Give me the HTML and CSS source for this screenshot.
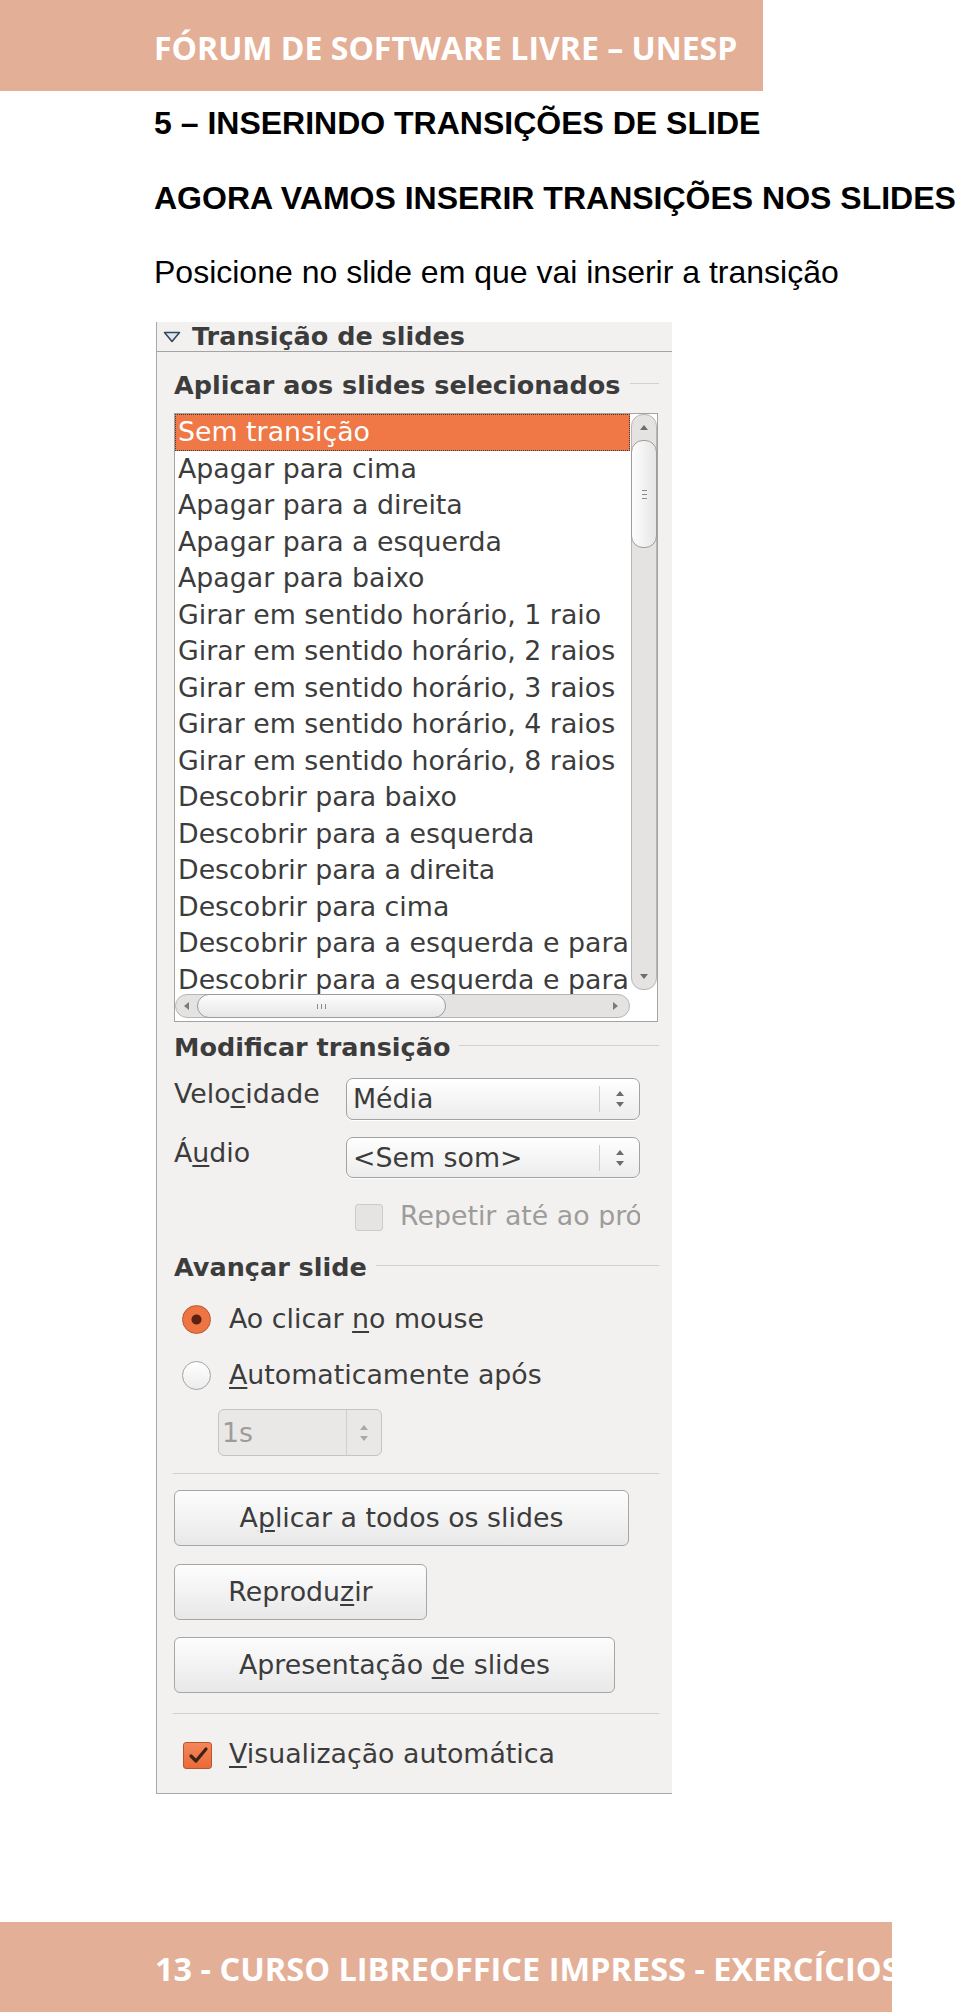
FILE: index.html
```html
<!DOCTYPE html>
<html lang="pt">
<head>
    <meta charset="UTF-8">
    <meta name="viewport" content="width=device-width, initial-scale=1.0">
    <title>Curso LibreOffice Impress - Exercícios</title>
    <link rel="stylesheet" href="styles.css">
</head>
<body>
    <header class="top-bar">FÓRUM DE SOFTWARE LIVRE – UNESP</header>

    <main class="content">
        <h1 class="title first">5 – INSERINDO TRANSIÇÕES DE SLIDE</h1>
        <h2 class="title">AGORA VAMOS INSERIR TRANSIÇÕES NOS SLIDES</h2>
        <p class="lead">Posicione no slide em que vai inserir a transição</p>

        <div class="panel">
            <div class="panel-head">
                <svg class="expander" width="18" height="12" viewBox="0 0 18 12">
                    <polygon points="1.5,1.5 16.5,1.5 9,10.5" fill="#dfe6ee" stroke="#34475c" stroke-width="1.6" stroke-linejoin="round"/>
                </svg>
                <span>Transição de slides</span>
            </div>

            <div class="panel-body">
                <div class="group-title"><span>Aplicar aos slides selecionados</span></div>

                <div class="listbox">
                    <div class="rows">
                        <div class="row selected">Sem transição</div>
                        <div class="row">Apagar para cima</div>
                        <div class="row">Apagar para a direita</div>
                        <div class="row">Apagar para a esquerda</div>
                        <div class="row">Apagar para baixo</div>
                        <div class="row">Girar em sentido horário, 1 raio</div>
                        <div class="row">Girar em sentido horário, 2 raios</div>
                        <div class="row">Girar em sentido horário, 3 raios</div>
                        <div class="row">Girar em sentido horário, 4 raios</div>
                        <div class="row">Girar em sentido horário, 8 raios</div>
                        <div class="row">Descobrir para baixo</div>
                        <div class="row">Descobrir para a esquerda</div>
                        <div class="row">Descobrir para a direita</div>
                        <div class="row">Descobrir para cima</div>
                        <div class="row">Descobrir para a esquerda e para baixo</div>
                        <div class="row">Descobrir para a esquerda e para cima</div>
                        <div class="row">Descobrir para a direita e para baixo</div>
                    </div>

                    <div class="vscroll">
                        <div class="vstep"><span class="arrow up"></span></div>
                        <div class="vthumb">
                            <i></i><i></i><i></i>
                        </div>
                        <div class="vtrough"></div>
                        <div class="vstep"><span class="arrow down"></span></div>
                    </div>

                    <div class="hscroll">
                        <div class="hstep left"><span class="arrow to-left"></span></div>
                        <div class="hthumb">
                            <i></i><i></i><i></i>
                        </div>
                        <div class="htrough"></div>
                        <div class="hstep right"><span class="arrow to-right"></span></div>
                    </div>
                </div>

                <div class="group-title second"><span>Modificar transição</span></div>

                <div class="field-row">
                    <div class="field-label">Velo<u>c</u>idade</div>
                    <div class="combo">
                        <div class="combo-text">Média</div>
                        <div class="combo-sep"></div>
                        <div class="combo-arrows"><span class="arrow up"></span><span class="arrow down"></span></div>
                    </div>
                </div>

                <div class="field-row audio">
                    <div class="field-label">Á<u>u</u>dio</div>
                    <div class="combo">
                        <div class="combo-text">&lt;Sem som&gt;</div>
                        <div class="combo-sep"></div>
                        <div class="combo-arrows"><span class="arrow up"></span><span class="arrow down"></span></div>
                    </div>
                </div>

                <div class="check-row repeat">
                    <span class="checkbox disabled"></span>
                    <span class="check-label muted"><u>R</u>epetir até ao próximo som</span>
                </div>

                <div class="group-title third"><span>Avançar slide</span></div>

                <div class="radio-row first">
                    <span class="radio checked"></span>
                    <span class="radio-label">Ao clicar <u>n</u>o mouse</span>
                </div>
                <div class="radio-row">
                    <span class="radio"></span>
                    <span class="radio-label"><u>A</u>utomaticamente após</span>
                </div>

                <div class="spin">
                    <div class="spin-text">1s</div>
                    <div class="spin-sep"></div>
                    <div class="combo-arrows"><span class="arrow up light"></span><span class="arrow down light"></span></div>
                </div>

                <div class="separator"></div>

                <button class="btn wide">A<u>p</u>licar a todos os slides</button>
                <button class="btn small">Reprodu<u>z</u>ir</button>
                <button class="btn medium">Apresentação <u>d</u>e slides</button>

                <div class="separator last"></div>

                <div class="check-row preview">
                    <span class="checkbox checked">
                        <svg width="22" height="20" viewBox="0 0 22 20">
                            <path d="M4 10 L9 15 L19 3" fill="none" stroke="#3b2414" stroke-width="3.2" stroke-linecap="round" stroke-linejoin="round"/>
                        </svg>
                    </span>
                    <span class="check-label"><u>V</u>isualização automática</span>
                </div>
            </div>
        </div>
    </main>

    <footer class="bottom-bar">13 - CURSO LIBREOFFICE IMPRESS - EXERCÍCIOS</footer>
</body>
</html>
```

FILE: styles.css
```css
body {
    margin: 0;
    background: #fff;
    font-family: "Liberation Sans", Arial, sans-serif;
}

.top-bar {
    width: 763px;
    height: 91px;
    box-sizing: border-box;
    padding: 5px 0 0 154px;
    background: #e4af97;
    color: #fff;
    font: 700 32px/86px "Open Sans", sans-serif;
    white-space: nowrap;
}

.content {
    padding-left: 154px;
}

.title {
    margin: 35px 0 0;
    font: 700 32px/40px "Liberation Sans", Arial, sans-serif;
    color: #000;
    white-space: nowrap;
}
.title.first { margin-top: 12px; }

.lead {
    margin: 34px 0 0;
    font: 400 32px/40px "Liberation Sans", Arial, sans-serif;
    color: #000;
    white-space: nowrap;
}

/* painel "Transição de slides" */
.panel {
    width: 516px;
    margin: 30px 0 0 2px;
    box-sizing: border-box;
    background: #f2f1f0;
    border-left: 1px solid #a9a9a9;
    border-bottom: 1px solid #a9a9a9;
    color: #3c3c3c;
    font-family: "DejaVu Sans", sans-serif;
    font-size: 26.8px;
}

.panel-head {
    display: flex;
    align-items: center;
    height: 29px;
    padding-left: 6px;
    border-bottom: 1px solid #a4a4a4;
    font-size: 25.5px;
    font-weight: 700;
    line-height: 29px;
}
.expander {
    margin-right: 11px;
}

.panel-body {
    padding: 16px 14px 24px 17px;
}

.group-title {
    display: flex;
    height: 30px;
    box-sizing: border-box;
    padding-top: 1.5px;
    font-size: 25.5px;
    font-weight: 700;
    line-height: 30px;
    white-space: nowrap;
}
.group-title::after {
    content: "";
    flex: 1;
    height: 1px;
    margin: 13.5px -1px 0 9px;
    background: #d2d1d0;
}
.group-title.second { margin-top: 8px; }
.group-title.third { margin-top: 19px; }

/* lista */
.listbox {
    display: grid;
    grid-template-columns: 455px 27px;
    grid-template-rows: 580px 27px;
    margin-top: 15px;
    border: 1px solid #a3a3a3;
    background: #fff;
}
.rows {
    overflow: hidden;
}
.row {
    height: 36.5px;
    box-sizing: border-box;
    padding-left: 3px;
    line-height: 35.5px;
    white-space: nowrap;
    overflow: hidden;
}
.row.selected {
    background: #f07746;
    color: #fff;
    outline: 1px dotted #3a3a3a;
    outline-offset: -1px;
}

.arrow {
    display: block;
    width: 0;
    height: 0;
    border-style: solid;
    border-color: transparent;
}
.arrow.up { border-width: 0 4px 5px; border-bottom-color: #6c6c6c; }
.arrow.down { border-width: 5px 4px 0; border-top-color: #6c6c6c; }
.arrow.to-left { border-width: 4px 5px 4px 0; border-right-color: #7a7a7a; }
.arrow.to-right { border-width: 4px 0 4px 5px; border-left-color: #7a7a7a; }
.arrow.up.light { border-bottom-color: #a8a8a8; }
.arrow.down.light { border-top-color: #a8a8a8; }

.vscroll {
    display: flex;
    flex-direction: column;
    margin: 0 0 4px 1px;
    border: 1px solid #b6b6b6;
    border-radius: 12px;
    background: #e4e3e2;
}
.vstep {
    display: flex;
    justify-content: center;
    align-items: center;
    height: 25px;
}
.vthumb {
    display: flex;
    flex-direction: column;
    justify-content: center;
    align-items: center;
    gap: 3px;
    height: 108px;
    margin: 0 -1px;
    border: 1px solid #9c9c9c;
    border-radius: 12px;
    background: linear-gradient(to right, #fdfdfd, #e6e6e6);
    box-sizing: border-box;
}
.vthumb i {
    display: block;
    width: 5px;
    height: 1px;
    background: #8a8a8a;
}
.vtrough {
    flex: 1;
}

.hscroll {
    display: flex;
    height: 24px;
    box-sizing: border-box;
    border: 1px solid #b6b6b6;
    border-radius: 12px;
    background: #e4e3e2;
}
.hstep {
    display: flex;
    justify-content: center;
    align-items: center;
}
.hstep.left { width: 21px; }
.hstep.right { width: 27px; margin-left: auto; }
.hthumb {
    display: flex;
    justify-content: center;
    align-items: center;
    gap: 3px;
    width: 249px;
    margin: -1px 0;
    border: 1px solid #9c9c9c;
    border-radius: 12px;
    background: linear-gradient(#fdfdfd, #e6e6e6);
    box-sizing: border-box;
}
.hthumb i {
    display: block;
    width: 1px;
    height: 5px;
    background: #8a8a8a;
}
.htrough {
    flex: 1;
}

/* campos */
.field-row {
    display: flex;
    margin-top: 18px;
}
.field-row.audio { margin-top: 17px; }
.field-label {
    width: 172px;
    line-height: 31.5px;
}
u {
    text-decoration-thickness: 2px;
    text-underline-offset: 3px;
}

.combo {
    display: flex;
    align-items: center;
    width: 294px;
    height: 42px;
    box-sizing: border-box;
    border: 1px solid #a2a2a2;
    border-radius: 7px;
    background: linear-gradient(#ffffff, #ececec);
    box-shadow: 0 1px 0 #fff;
}
.field-row.audio .combo { height: 41px; }
.combo-text {
    width: 246px;
    padding-left: 6px;
    line-height: 40px;
}
.combo-sep {
    width: 1px;
    height: 26px;
    background: #cdcdcd;
}
.combo-arrows {
    flex: 1;
    display: flex;
    flex-direction: column;
    align-items: center;
    gap: 6px;
}

.check-row {
    display: flex;
    align-items: flex-start;
    white-space: nowrap;
}
.check-row.repeat {
    margin-top: 26px;
    padding-left: 181px;
}
.checkbox {
    display: flex;
    justify-content: center;
    align-items: center;
    width: 28px;
    height: 27px;
    box-sizing: border-box;
    border-radius: 3px;
}
.checkbox.disabled {
    border: 1px solid #cbcbcb;
    background: #e5e4e3;
}
.checkbox.checked {
    width: 29px;
    border: 1px solid #b7562d;
    background: linear-gradient(#f4875a, #ea6a38);
}
.check-label {
    margin-left: 17px;
    line-height: 24px;
}
.check-label.muted {
    width: 240px;
    overflow: hidden;
    color: #9d9c9b;
}
.check-row.preview {
    margin-top: 28px;
    padding-left: 9px;
}

.radio-row {
    display: flex;
    align-items: center;
    height: 36px;
    margin-top: 20px;
    padding-left: 8px;
}
.radio-row.first { margin-top: 21px; }
.radio {
    width: 29px;
    height: 29px;
    box-sizing: border-box;
    border-radius: 50%;
    border: 1px solid #a3a3a3;
    background: linear-gradient(#ffffff, #ececec);
}
.radio.checked {
    border-color: #b7562d;
    background: radial-gradient(circle, #5b2010 0 4.5px, #ef7443 5.5px);
}
.radio-label {
    margin-left: 18px;
    line-height: 36px;
}

.spin {
    display: flex;
    align-items: center;
    width: 164px;
    height: 47px;
    margin: 16px 0 0 44px;
    box-sizing: border-box;
    border: 1px solid #c4c4c4;
    border-radius: 6px;
    background: #e9e8e7;
    color: #9d9c9b;
}
.spin-text {
    width: 124px;
    padding-left: 3px;
    line-height: 45px;
}
.spin-sep {
    width: 1px;
    height: 45px;
    background: #cfcfcf;
}

.separator {
    height: 1px;
    margin: 17px -1px 0;
    background: #d2d1d0;
}
.separator.last { margin-top: 20px; }

.btn {
    display: block;
    height: 56px;
    margin-top: 18px;
    padding: 0;
    box-sizing: border-box;
    border: 1px solid #a6a6a6;
    border-radius: 6px;
    background: linear-gradient(#fdfdfd, #e8e8e8);
    color: #3c3c3c;
    font: inherit;
    line-height: 54px;
    text-align: center;
}
.btn.wide { width: 455px; margin-top: 16px; }
.btn.small { width: 253px; }
.btn.medium { width: 441px; margin-top: 17px; }

.bottom-bar {
    width: 892px;
    height: 90px;
    margin-top: 128px;
    box-sizing: border-box;
    padding: 4px 0 0 155px;
    background: #e4af97;
    color: #fff;
    font: 700 32.5px/86px "Open Sans", sans-serif;
    white-space: nowrap;
    overflow: hidden;
}
```
